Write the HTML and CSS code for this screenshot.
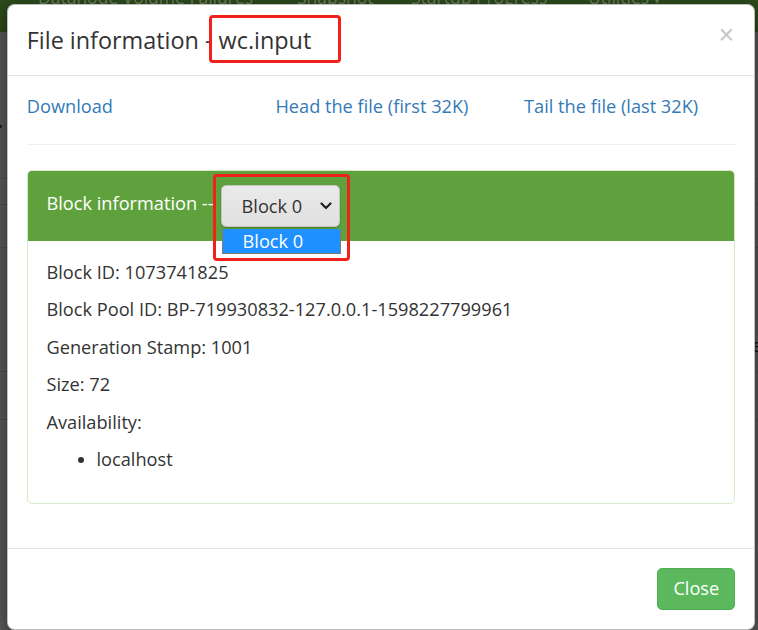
FILE: index.html
```html
<!DOCTYPE html>
<html>
<head>
<meta charset="utf-8">
<link rel="stylesheet" href="styles.css">
</head>
<body>
<div class="page">
  <nav class="navbar">
    <span class="nav-item n1">Datanode Volume Failures</span>
    <span class="nav-item n2">Snapshot</span>
    <span class="nav-item n3">Startup Progress</span>
    <span class="nav-item n4">Utilities <span class="caret">▾</span></span>
  </nav>
  <div class="bg-content">
    <div class="bg-title">r</div>
    <div class="bg-line l1"></div>
    <div class="bg-line l2"></div>
    <div class="bg-line l3"></div>
    <div class="bg-line l4"></div>
    <div class="bg-line l5"></div>
  </div>
  <div class="bg-right-e">e</div>
</div>

<div class="modal">
  <div class="modal-header">
    <h4 class="modal-title">File information - wc.input</h4>
    <span class="close">×</span>
  </div>
  <div class="modal-body">
    <div class="links">
      <a class="link">Download</a>
      <a class="link">Head the file (first 32K)</a>
      <a class="link">Tail the file (last 32K)</a>
    </div>
    <hr class="rule">
    <div class="panel">
      <div class="panel-heading">
        <span class="heading-text">Block information --</span>
        <div class="select">
          <span class="select-text">Block 0</span>
          <svg class="chev" width="12" height="8" viewBox="0 0 12 8"><path d="M1.5 1.5 L6 6 L10.5 1.5" fill="none" stroke="#222" stroke-width="2.2" stroke-linecap="round" stroke-linejoin="round"/></svg>
          <div class="dropdown"><div class="option">Block 0</div></div>
        </div>
      </div>
      <div class="panel-body">
        <p>Block ID: 1073741825</p>
        <p>Block Pool ID: BP-719930832-127.0.0.1-1598227799961</p>
        <p>Generation Stamp: 1001</p>
        <p>Size: 72</p>
        <p>Availability:</p>
        <ul class="hosts"><li>localhost</li></ul>
      </div>
    </div>
  </div>
  <div class="modal-footer">
    <button class="btn-close">Close</button>
  </div>
  <div class="mark mark-title"></div>
  <div class="mark mark-select"></div>
</div>
</body>
</html>
```
FILE: styles.css
```css
html, body {
  margin: 0;
  padding: 0;
  width: 758px;
  height: 630px;
  overflow: hidden;
  background: #5a5a5a;
  font-family: "Open Sans", "Liberation Sans", sans-serif;
}

.page {
  position: relative;
  width: 758px;
  height: 630px;
}

.navbar {
  height: 31px;
  background: #2c4a1b;
  border-bottom: 1px solid #274418;
  position: relative;
  overflow: hidden;
}

.nav-item {
  position: absolute;
  top: -15px;
  font-size: 17.5px;
  color: #6c7f5e;
  white-space: nowrap;
}
.n1 { left: 38px; }
.n2 { left: 297px; }
.n3 { left: 411px; }
.n4 { left: 588px; }
.caret { font-size: 12px; }

.bg-content {
  position: relative;
  height: 598px;
}
.bg-title {
  position: absolute;
  left: -14px;
  top: 80px;
  font-size: 40px;
  line-height: 40px;
  color: #15192a;
  font-weight: 500;
}
.bg-line {
  position: absolute;
  left: 0;
  width: 758px;
  height: 1px;
  background: #4e4e4e;
}
.l1 { top: 146px; }
.l2 { top: 172px; }
.l3 { top: 215px; }
.l4 { top: 339px; }
.l5 { top: 387px; }

.bg-right-e {
  position: absolute;
  left: 752px;
  top: 333px;
  font-size: 17.5px;
  color: #111;
}

/* Modal */
.modal {
  position: absolute;
  left: 7px;
  top: 4px;
  width: 746px;
  background: #fff;
  border: 1px solid rgba(0, 0, 0, 0.25);
  border-radius: 7.5px;
  box-shadow: 0 6px 19px rgba(0, 0, 0, 0.5);
  color: #333;
  font-size: 18.2px;
  line-height: 25px;
}

.modal-header {
  display: flex;
  justify-content: space-between;
  align-items: flex-start;
  padding: 18.75px;
  border-bottom: 1px solid #e5e5e5;
}
.modal-title {
  margin: 0;
  font-size: 23.4px;
  line-height: 32px;
  font-weight: normal;
  color: #333;
}
.close {
  font-size: 27px;
  font-weight: normal;
  line-height: 1;
  color: #000;
  opacity: 0.22;
  margin-top: -2px;
  margin-right: 1px;
  font-family: "Liberation Sans", sans-serif;
}

.modal-body {
  padding: 18.75px;
}

.links {
  display: grid;
  grid-template-columns: repeat(3, 1fr);
  column-gap: 37.5px;
}
.link {
  color: #337ab7;
  text-decoration: none;
  white-space: nowrap;
}

.rule {
  margin: 25px 0;
  border: 0;
  border-top: 1px solid #eee;
}

.panel {
  border: 1px solid #d6e9c6;
  border-radius: 5px;
  margin-bottom: 25px;
}
.panel-heading {
  display: flex;
  align-items: center;
  gap: 7px;
  padding: 13.5px 18.75px;
  background: #5fa23d;
  color: #fff;
  border-radius: 4px 4px 0 0;
}
.heading-text {
  margin-top: -5px;
}

.select {
  position: relative;
  box-sizing: border-box;
  width: 119px;
  height: 42.5px;
  display: flex;
  align-items: center;
  justify-content: space-between;
  padding: 0 7px 0 20px;
  background: linear-gradient(#eaeaea, #e0e0e0);
  border: 1px solid #c4c4c4;
  border-radius: 5px;
  box-shadow: 0 1px 2px rgba(0, 0, 0, 0.25);
  color: #333;
}
.chev { display: block; }

.dropdown {
  position: absolute;
  left: 0;
  top: 43.5px;
  width: 119px;
  box-sizing: border-box;
  border: 1px solid #7a7a7a;
  border-top: 0;
  background: #fff;
}
.option {
  background: #1e90ff;
  color: #fff;
  padding: 0 0 0 20px;
  height: 24px;
  line-height: 24px;
  font-size: 18.2px;
}

.panel-body {
  padding: 18.75px;
}
.panel-body p {
  margin: 0 0 12.5px;
}
.hosts {
  margin: 0 0 12.5px;
  padding-left: 50px;
}

.modal-footer {
  padding: 18.75px;
  border-top: 1px solid #e5e5e5;
  display: flex;
  justify-content: flex-end;
}
.btn-close {
  font-family: inherit;
  font-size: 18.2px;
  line-height: 25px;
  padding: 7.5px 15px;
  color: #fff;
  background: #5cb85c;
  border: 1px solid #4cae4c;
  border-radius: 5px;
}

/* Red annotation marks */
.mark {
  position: absolute;
  border: 3px solid #f0201a;
  border-radius: 4px;
  box-sizing: border-box;
}
.mark-title {
  left: 201px;
  top: 10px;
  width: 132px;
  height: 48px;
}
.mark-select {
  left: 205px;
  top: 169px;
  width: 137px;
  height: 87px;
}
```
